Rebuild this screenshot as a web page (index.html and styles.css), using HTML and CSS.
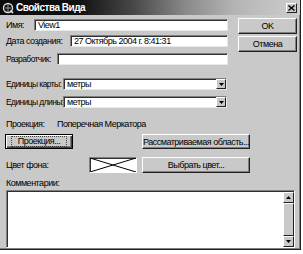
FILE: index.html
```html
<!DOCTYPE html>
<html lang="ru">
<head>
    <meta charset="UTF-8">
    <title>Свойства Вида</title>
    <link rel="stylesheet" href="styles.css">
</head>
<body>
    <div class="window">
        <div class="titlebar">
            <svg class="app-icon" width="12" height="12" viewBox="0 0 12 12">
                <circle cx="6" cy="6" r="4.5" fill="none" stroke="#ddd" stroke-width="1.4"/>
                <path d="M3 6 H9 M6 2 V10" stroke="#999" stroke-width="1"/>
                <path d="M8.5 8.5 L11 11" stroke="#eee" stroke-width="1.6"/>
            </svg>
            <span class="title">Свойства Вида</span>
            <span class="close">
                <svg width="7" height="6" viewBox="0 0 7 6"><path d="M0.5 0.5 L6.5 5.5 M6.5 0.5 L0.5 5.5" stroke="#000" stroke-width="1.4"/></svg>
            </span>
        </div>

        <div class="dialog">
            <div class="top">
                <div class="fields">
                    <div class="row row-name">
                        <span class="label w-name">Имя:</span>
                        <div class="field">View1</div>
                    </div>
                    <div class="row row-date">
                        <span class="label w-date">Дата создания:</span>
                        <div class="field">27 Октябрь 2004 г. 8:41:31</div>
                    </div>
                    <div class="row row-dev">
                        <span class="label w-dev">Разработчик:</span>
                        <div class="field"></div>
                    </div>
                </div>
                <div class="actions">
                    <div class="btn btn-ok">OK</div>
                    <div class="btn btn-cancel">Отмена</div>
                </div>
            </div>

            <div class="row row-map">
                <span class="label w-unit">Единицы карты:</span>
                <div class="field select">метры<span class="drop"><svg width="5" height="3" viewBox="0 0 5 3"><path d="M0 0 H5 L2.5 3 Z" fill="#000"/></svg></span></div>
            </div>
            <div class="row row-len">
                <span class="label w-unit">Единицы длины:</span>
                <div class="field select">метры<span class="drop"><svg width="5" height="3" viewBox="0 0 5 3"><path d="M0 0 H5 L2.5 3 Z" fill="#000"/></svg></span></div>
            </div>

            <div class="row row-proj">
                <span class="label w-proj">Проекция:</span>
                <span class="value">Поперечная Меркатора</span>
            </div>
            <div class="row row-buttons">
                <div class="btn btn-proj"><span class="focus">Проекция...</span></div>
                <div class="btn btn-area">Рассматриваемая область...</div>
            </div>
            <div class="row row-color">
                <span class="label w-color">Цвет фона:</span>
                <div class="swatch">
                    <svg width="46" height="14" viewBox="0 0 46 14"><path d="M0 0 L46 14 M46 0 L0 14" stroke="#000" stroke-width="1"/></svg>
                </div>
                <div class="btn btn-pick">Выбрать цвет...</div>
            </div>

            <div class="row row-comment">
                <span class="label">Комментарии:</span>
            </div>
            <div class="memo">
                <div class="memo-text"></div>
                <div class="scrollbar">
                    <div class="arrow"><svg width="5" height="3" viewBox="0 0 5 3"><path d="M0 3 H5 L2.5 0 Z" fill="#000"/></svg></div>
                    <div class="thumb"></div>
                    <div class="arrow"><svg width="5" height="3" viewBox="0 0 5 3"><path d="M0 0 H5 L2.5 3 Z" fill="#000"/></svg></div>
                </div>
            </div>
        </div>
    </div>
</body>
</html>
```

FILE: styles.css
```css
/* Reset */
* {
    margin: 0;
    padding: 0;
    box-sizing: border-box;
}

body {
    background-color: #ffffff;
    font-family: 'Liberation Sans', Arial, sans-serif;
    font-size: 9px;
    letter-spacing: -0.5px;
    color: #000;
}

/* Window frame */
.window {
    width: 301px;
    height: 250px;
    background-color: #c9c9c9;
    border-right: 1px solid #202020;
    border-bottom: 1px solid #202020;
    box-shadow: inset -1px -1px #808080;
}

/* Title bar */
.titlebar {
    height: 15px;
    display: flex;
    align-items: center;
    padding: 0 3px 0 2px;
    background: linear-gradient(to right, #0c0c0c 0%, #101010 26%, #4a4a4a 45%, #8a8a8a 62%, #b4b4b4 78%, #cdcdcd 100%);
}

.app-icon {
    flex: 0 0 12px;
}

.title {
    margin-left: 2px;
    color: #ffffff;
    font-weight: bold;
    font-size: 10px;
    letter-spacing: -0.5px;
    flex: 1;
}

.close {
    width: 11px;
    height: 10px;
    background-color: #c9c9c9;
    border: 1px solid;
    border-color: #fff #202020 #202020 #fff;
    display: flex;
    align-items: center;
    justify-content: center;
}

/* Dialog body */
.dialog {
    padding: 0 0 0 6px;
}

.top {
    display: flex;
    align-items: flex-start;
}

.fields {
    width: 222px;
}

.row {
    display: flex;
    align-items: center;
}

.label {
    white-space: nowrap;
    flex: 0 0 auto;
}

.w-name { width: 28px; }
.w-date { width: 64px; }
.w-dev { width: 51px; font-size: 8.5px; letter-spacing: -0.6px; }
.w-unit { width: 57px; font-size: 8.5px; letter-spacing: -0.6px; }
.w-proj { width: 51px; }
.w-color { width: 83px; }

.field {
    flex: 1;
    height: 12px;
    background-color: #ffffff;
    border: 1px solid;
    border-color: #808080 #e8e8e8 #e8e8e8 #808080;
    box-shadow: inset 1px 1px #303030;
    padding: 0 3px;
    line-height: 10px;
    white-space: nowrap;
}

.row-name { margin-top: 4px; height: 12px; }
.row-date { margin-top: 4px; height: 12px; }
.row-dev { margin-top: 6px; height: 12px; }

/* Buttons */
.actions {
    margin-left: 10px;
    width: 59px;
    padding-top: 3px;
}

.btn {
    background-color: #c9c9c9;
    border: 1px solid;
    border-color: #ffffff #202020 #202020 #ffffff;
    box-shadow: inset -1px -1px #808080;
    display: flex;
    align-items: center;
    justify-content: center;
    white-space: nowrap;
}

.btn-ok { height: 16px; }
.btn-cancel { height: 16px; margin-top: 2px; }

/* Selects */
.row-map { margin-top: 13px; height: 12px; }
.row-len { margin-top: 6px; height: 12px; }

.select {
    flex: 0 0 164px;
    display: flex;
    justify-content: space-between;
    align-items: center;
    padding-right: 0;
}

.drop {
    width: 10px;
    height: 10px;
    background-color: #c9c9c9;
    border: 1px solid;
    border-color: #fff #202020 #202020 #fff;
    display: flex;
    align-items: center;
    justify-content: center;
}

/* Projection */
.row-proj { margin-top: 10px; height: 12px; }

.row-buttons {
    margin-top: 4px;
    height: 15px;
    align-items: stretch;
}

.btn-proj {
    width: 68px;
    margin-left: -1px;
    border: 1px solid #000;
    box-shadow: inset 1px 1px #fff, inset -1px -1px #404040, inset -2px -2px #808080;
}

.focus {
    border: 1px dotted #404040;
    padding: 0 6px;
    line-height: 9px;
}

.btn-area {
    width: 108px;
    margin-left: 69px;
}

/* Colour */
.row-color {
    margin-top: 8px;
    height: 16px;
    align-items: stretch;
}

.row-color .label {
    align-self: center;
}

.swatch {
    width: 48px;
    background-color: #ffffff;
    border: 1px solid;
    border-color: #808080 #fff #fff #808080;
    box-shadow: inset 1px 1px #303030;
    display: flex;
}

.btn-pick {
    width: 108px;
    margin-left: 5px;
}

/* Comments */
.row-comment { margin-top: 4px; height: 12px; }

.memo {
    margin-top: 1px;
    width: 289px;
    height: 58px;
    background-color: #ffffff;
    border: 1px solid;
    border-color: #808080 #fff #fff #808080;
    box-shadow: inset 1px 1px #303030;
    display: flex;
    padding: 1px 0 0 1px;
}

.memo-text {
    flex: 1;
}

.scrollbar {
    width: 11px;
    display: flex;
    flex-direction: column;
}

.arrow {
    height: 11px;
    background-color: #c9c9c9;
    border: 1px solid;
    border-color: #fff #202020 #202020 #fff;
    display: flex;
    align-items: center;
    justify-content: center;
}

.thumb {
    flex: 1;
    background-color: #c9c9c9;
    border: 1px solid;
    border-color: #fff #202020 #202020 #fff;
}
```
